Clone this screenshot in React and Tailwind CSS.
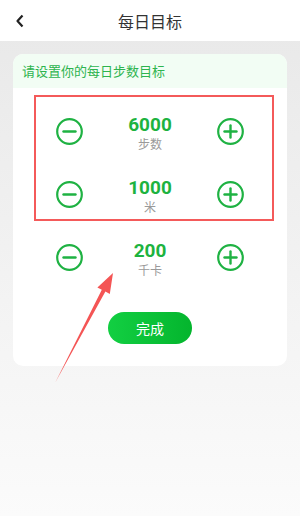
import React from 'react';

const goals = [
  { value: 6000, unit: '步数' },
  { value: 1000, unit: '米' },
  { value: 200, unit: '千卡' },
];

function CircleBtn({ plus }) {
  return (
    <svg width="27" height="27" viewBox="0 0 27 27" className="mt-[18px] shrink-0">
      <circle cx="13.5" cy="13.5" r="12.3" fill="none" stroke="#1fb243" strokeWidth="2.2" />
      <line x1="7.5" y1="13.5" x2="19.5" y2="13.5" stroke="#1fb243" strokeWidth="2.4" strokeLinecap="round" />
      {plus && <line x1="13.5" y1="7.5" x2="13.5" y2="19.5" stroke="#1fb243" strokeWidth="2.4" strokeLinecap="round" />}
    </svg>
  );
}

export default function App() {
  return (
    <div
      className="relative w-[300px] min-h-[516px] bg-gradient-to-b from-[#e8e8e8] to-[#fbfbfb]"
      style={{ fontFamily: '"Noto Sans CJK SC", "Noto Sans", sans-serif' }}
    >
      {/* 顶部导航 */}
      <div className="relative h-[41px] bg-white flex items-center justify-center">
        <svg width="10" height="14" viewBox="0 0 10 14" className="absolute left-[15px] top-[14px]">
          <polyline points="7.5,1.5 2.5,7 7.5,12.5" fill="none" stroke="#222" strokeWidth="2.2" strokeLinejoin="round" />
        </svg>
        <span className="text-[16px] text-[#333]">每日目标</span>
      </div>

      {/* 卡片 */}
      <div className="mx-[13px] mt-[13px] bg-white rounded-[10px] overflow-hidden pb-[22px]">
        <div className="h-[34px] bg-[#f2fdf4] flex items-center pl-[9px] text-[13px] text-[#2db44e]">
          请设置你的每日步数目标
        </div>
        <div className="pt-[12px]">
          {goals.map((g) => (
            <div key={g.unit} className="h-[63px] flex justify-between px-[43px]">
              <CircleBtn />
              <div className="mt-[14px] flex flex-col items-center">
                <span
                  className="text-[19px] leading-[22px] font-bold text-[#1db33f]"
                  style={{ fontFamily: 'Roboto, "Noto Sans CJK SC", sans-serif' }}
                >
                  {g.value}
                </span>
                <span className="text-[12px] leading-[16px] text-[#9a9a9a]">{g.unit}</span>
              </div>
              <CircleBtn plus />
            </div>
          ))}
        </div>
        <div className="flex justify-center mt-[23px]">
          <button className="w-[84px] h-[32px] rounded-full bg-gradient-to-r from-[#12cf42] to-[#04b52d] text-white text-[14px]">
            完成
          </button>
        </div>
      </div>

      {/* 标注 */}
      <div className="absolute left-[34px] top-[95px] w-[240px] h-[126px] border-2 border-[#f45a5a] pointer-events-none" />
      <svg width="300" height="516" className="absolute left-0 top-0 pointer-events-none">
        <polygon
          points="55,383 101.8,289.8 97.4,287.4 113,273 109.8,294 105.4,291.6"
          fill="#f45555"
        />
      </svg>
    </div>
  );
}
